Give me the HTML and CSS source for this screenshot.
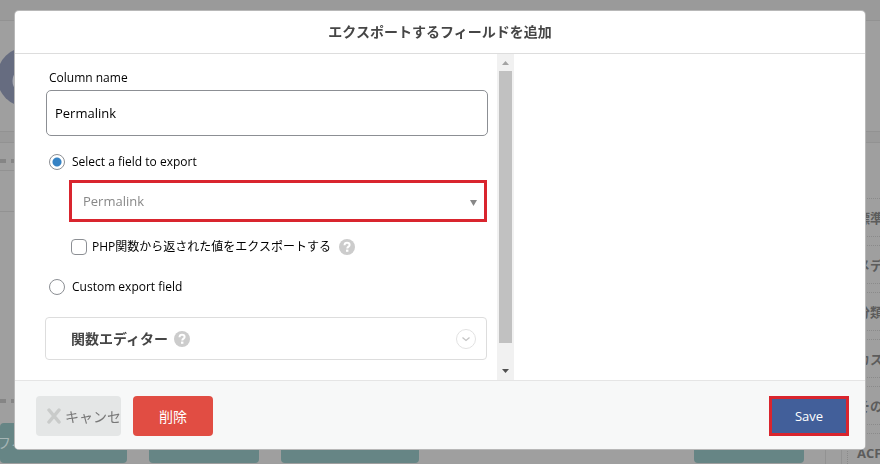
FILE: index.html
```html
<!DOCTYPE html>
<html lang="ja">
<head>
    <meta charset="UTF-8">
    <meta name="viewport" content="width=device-width, initial-scale=1.0">
    <title>エクスポートするフィールドを追加</title>
    <link rel="stylesheet" href="styles.css">
</head>
<body>

<!-- Dimmed page behind the dialog -->
<div class="page" aria-hidden="true">
    <div class="banner">
        <svg class="logo" width="60" height="60" viewBox="0 0 60 60">
            <circle cx="27" cy="30" r="30" fill="#666c80"/>
            <circle cx="26" cy="34" r="12" fill="none" stroke="#a9abb2" stroke-width="3"/>
        </svg>
    </div>
    <div class="workspace">
        <div class="columns-area">
            <div class="tab-row"><span class="dash"></span><span class="dash"></span></div>
            <div class="drop-row"></div>
            <div class="empty-area"><span class="dash"></span><span class="dash"></span></div>
            <div class="page-actions">
                <span class="page-btn btn-first">フィールド追加</span>
                <span class="page-btn btn-second"></span>
                <span class="page-btn btn-third"></span>
                <span class="page-btn btn-last"></span>
            </div>
        </div>
        <div class="field-list">
            <div class="field-item">標準</div>
            <div class="field-item">メディア</div>
            <div class="field-item">分類</div>
            <div class="field-item">カスタム</div>
            <div class="field-item">その他</div>
            <div class="field-item">ACF</div>
        </div>
    </div>
</div>

<!-- Dialog -->
<div class="overlay">
    <form class="dialog" role="dialog" aria-labelledby="dialog-title">
        <h1 class="dialog-title" id="dialog-title">エクスポートするフィールドを追加</h1>

        <div class="dialog-body">
            <div class="scroll-pane">
                <div class="fields">
                    <label class="column-label" for="column-name">Column name</label>
                    <input class="column-input" type="text" id="column-name" value="Permalink">

                    <div class="option-row">
                        <input class="radio" type="radio" name="field-type" id="type-field" checked>
                        <label for="type-field">Select a field to export</label>
                    </div>

                    <div class="select-wrap">
                        <select class="field-select" id="field-select" aria-label="Select a field to export">
                            <option>Permalink</option>
                        </select>
                        <svg class="select-arrow" width="7" height="6" viewBox="0 0 7 6"><path d="M0 0h7L3.500 6z" fill="#888"/></svg>
                    </div>

                    <div class="option-row php-row">
                        <input class="checkbox" type="checkbox" id="php-value">
                        <label for="php-value">PHP関数から返された値をエクスポートする</label>
                        <svg class="help" width="16" height="16" viewBox="0 0 16 16">
                            <circle cx="8" cy="8" r="8" fill="#ccc"/>
                            <path d="M5.5 6.2C5.6 4.6 6.6 3.8 8 3.8s2.6.8 2.6 2.1c0 1.7-2.3 1.8-2.3 3.6" fill="none" stroke="#fff" stroke-width="2"/>
                            <rect x="7" y="10.6" width="2.4" height="2.2" fill="#fff"/>
                        </svg>
                    </div>

                    <div class="option-row">
                        <input class="radio" type="radio" name="field-type" id="type-custom">
                        <label for="type-custom">Custom export field</label>
                    </div>

                    <div class="editor-panel">
                        <h2 class="editor-title">関数エディター</h2>
                        <svg class="help" width="16" height="16" viewBox="0 0 16 16">
                            <circle cx="8" cy="8" r="8" fill="#ccc"/>
                            <path d="M5.5 6.2C5.6 4.6 6.6 3.8 8 3.8s2.6.8 2.6 2.1c0 1.7-2.3 1.8-2.3 3.6" fill="none" stroke="#fff" stroke-width="2"/>
                            <rect x="7" y="10.6" width="2.4" height="2.2" fill="#fff"/>
                        </svg>
                        <button class="toggle-btn" type="button" aria-label="関数エディターを開く">
                            <svg width="20" height="20" viewBox="0 0 20 20" fill="none">
                                <circle cx="10" cy="10" r="9.5" stroke="#e2e2e2"/>
                                <path d="M6.5 8.500L10 11.5l3.5-3" stroke="#c4c4c4" stroke-width="1.3"/>
                            </svg>
                        </button>
                    </div>
                </div>

                <div class="scrollbar">
                    <svg class="scroll-arrow" width="17" height="17" viewBox="0 0 17 17"><path d="M5 11h7L8.500 7z" fill="#a3a3a3"/></svg>
                    <div class="scroll-track"><div class="scroll-thumb"></div></div>
                    <svg class="scroll-arrow" width="17" height="17" viewBox="0 0 17 17"><path d="M5 6h7L8.500 10z" fill="#505050"/></svg>
                </div>
            </div>
        </div>

        <div class="dialog-footer">
            <button class="btn btn-cancel" type="button">
                <svg class="cancel-icon" width="16" height="16" viewBox="0 0 16 16"><path d="M3 2l10 12M13 2L3 14" stroke="#c9cbca" stroke-width="3.500" stroke-linecap="round"/></svg>
                <span class="cancel-text">キャンセル</span>
            </button>
            <button class="btn btn-delete" type="button">削除</button>
            <button class="btn btn-save" type="submit">Save</button>
        </div>
    </form>
</div>

</body>
</html>
```
FILE: styles.css
```css
* {
    margin: 0;
    padding: 0;
    box-sizing: border-box;
}

body {
    font-family: 'Open Sans', 'Noto Sans CJK JP', sans-serif;
    font-size: 12px;
    line-height: 20px;
    color: #000;
    background-color: #9a9a9a;
}

button,
input,
select {
    font-family: inherit;
}

/* Page behind */
.page {
    height: 100vh;
    padding-top: 20px;
    display: flex;
    flex-direction: column;
    overflow: hidden;
}

.banner {
    height: 112px;
    padding: 26px 0;
    background-color: #9f9f9f;
    border-top: 1px solid #929292;
    border-bottom: 1px solid #929292;
}

.logo {
    display: block;
}

.workspace {
    flex: 1;
    min-height: 0;
    margin-top: 10px;
    display: flex;
    background-color: #9f9f9f;
    border-top: 1px solid #929292;
}

.columns-area {
    flex: 1;
    display: flex;
    flex-direction: column;
    border-right: 1px solid #929292;
}

.tab-row {
    height: 28px;
    display: flex;
    gap: 5px;
    align-items: flex-end;
    padding-bottom: 7px;
    border-bottom: 1px solid #929292;
}

.drop-row {
    height: 41px;
    border-bottom: 1px solid #929292;
}

.dash {
    width: 6px;
    height: 4px;
    background-color: #858585;
}

.empty-area {
    flex: 1;
    display: flex;
    gap: 5px;
    align-items: flex-end;
    padding-bottom: 20px;
}

.page-actions {
    display: flex;
    gap: 22px;
    padding-right: 21px;
    margin-bottom: 1px;
}

.page-btn {
    height: 40px;
    line-height: 40px;
    color: #a5b5b5;
    font-size: 14px;
    white-space: nowrap;
    background-color: #668585;
    border-radius: 4px;
}

.btn-first {
    width: 127px;
    text-indent: -3px;
}

.btn-second,
.btn-last {
    width: 110px;
}

.btn-third {
    width: 138px;
}

.btn-last {
    margin-left: auto;
}

.field-list {
    width: 39px;
    flex-shrink: 0;
    margin-left: 15px;
    padding: 55px 0 0 5px;
    display: flex;
    flex-direction: column;
    gap: 8px;
    overflow: hidden;
    border-left: 1px solid #929292;
}

.field-item {
    flex-shrink: 0;
    height: 39px;
    line-height: 39px;
    padding-left: 9px;
    font-size: 13px;
    font-weight: bold;
    color: #5c5c5c;
    white-space: nowrap;
    border: 1px dotted #8a8a8a;
    border-right: none;
}

/* Dialog */
.overlay {
    position: fixed;
    inset: 0;
    padding: 11px 15px;
}

.dialog {
    background-color: #fff;
    border-radius: 4px;
    box-shadow: 0 0 0 1px #b8b8b8;
    overflow: hidden;
}

.dialog-title {
    padding: 11px 0;
    font-size: 14px;
    line-height: 20px;
    text-align: center;
    color: #464646;
    border-bottom: 1px solid #ddd;
}

.dialog-body {
    display: grid;
    grid-template-columns: 499fr 351fr;
}

.scroll-pane {
    display: flex;
}

.fields {
    flex: 1;
    padding: 14px 9px 20px 31px;
}

.column-label {
    display: block;
    padding-left: 3px;
    margin-bottom: 2px;
}

.column-input {
    display: block;
    width: 100%;
    height: 46px;
    padding: 0 8px;
    margin-bottom: 16px;
    font-size: 13px;
    color: #000;
    border: 1px solid #8c8f94;
    border-radius: 5px;
}

.option-row {
    display: flex;
    align-items: center;
    gap: 7px;
    padding-left: 3px;
}

.radio,
.checkbox {
    appearance: none;
    width: 16px;
    height: 16px;
    flex-shrink: 0;
    background-color: #fff;
    border: 1px solid #8c8f94;
}

.radio {
    border-radius: 50%;
}

.radio:checked {
    background-image: radial-gradient(circle, #3582c4 4px, transparent 5px);
}

.checkbox {
    border-radius: 4px;
}

.select-wrap {
    position: relative;
    margin: 8px 1px 15px 23px;
}

.field-select {
    appearance: none;
    display: block;
    width: 100%;
    height: 42px;
    padding: 0 24px 0 11px;
    font-size: 13px;
    color: #888;
    background-color: #fff;
    border: 3px solid #d9252e;
    border-radius: 0;
}

.select-arrow {
    position: absolute;
    top: 20px;
    right: 10px;
    pointer-events: none;
}

.php-row {
    padding-left: 25px;
    gap: 5px;
    margin-bottom: 20px;
}

.php-row .help {
    margin-left: 3px;
}

.help {
    flex-shrink: 0;
}

.editor-panel {
    display: flex;
    align-items: center;
    gap: 6px;
    height: 43px;
    margin: 20px 1px 0 -1px;
    padding: 0 10px 0 25px;
    border: 1px solid #ddd;
    border-radius: 4px;
}

.editor-title {
    font-size: 14px;
    color: #464646;
}

.toggle-btn {
    margin-left: auto;
    width: 20px;
    height: 20px;
    background: none;
    border: none;
    cursor: pointer;
}

.scrollbar {
    width: 17px;
    display: flex;
    flex-direction: column;
    background-color: #f1f1f1;
}

.scroll-track {
    flex: 1;
    padding: 0 2px;
}

.scroll-thumb {
    height: 93%;
    background-color: #c1c1c1;
}

.dialog-footer {
    display: flex;
    gap: 12px;
    padding: 15px 16px 13px 21px;
    background-color: #f7f8f8;
    border-top: 1px solid #e5e5e5;
}

.btn {
    height: 40px;
    font-size: 14px;
    border: none;
    border-radius: 4px;
    cursor: pointer;
}

.btn-cancel {
    width: 85px;
    padding-left: 10px;
    display: flex;
    align-items: center;
    gap: 3px;
    overflow: hidden;
    white-space: nowrap;
    color: #777;
    background-color: #e4e6e6;
}

.cancel-icon {
    flex-shrink: 0;
}

.btn-delete {
    width: 80px;
    color: #fff;
    background-color: #e14d43;
}

.btn-save {
    width: 80px;
    margin-left: auto;
    font-size: 13px;
    color: #fff;
    background-color: #425f9a;
    border: 3px solid #d9252e;
    border-radius: 0;
}
```
